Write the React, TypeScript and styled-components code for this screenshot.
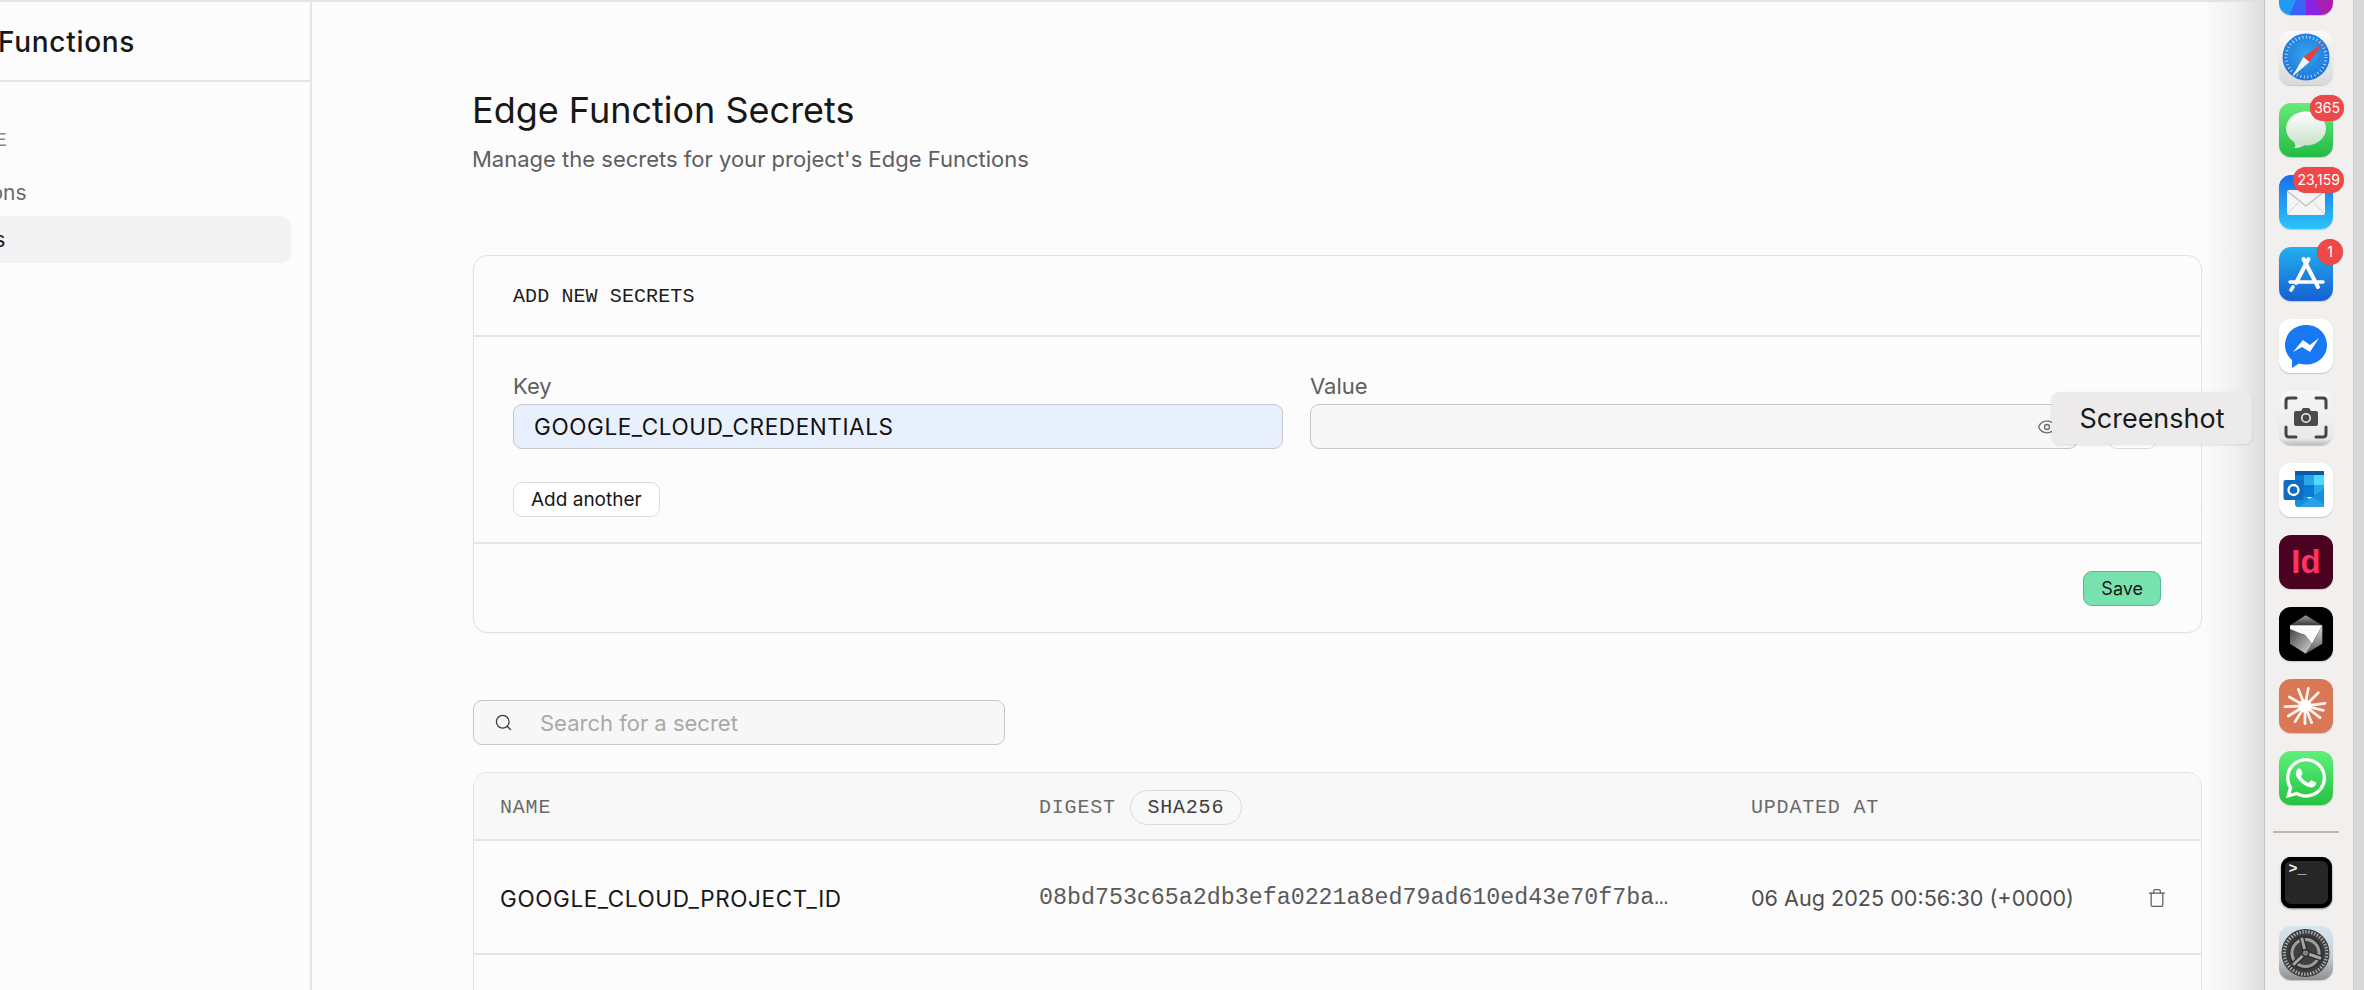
import React from "react";
import styled, { createGlobalStyle } from "styled-components";
import { Search, Eye, Trash } from "lucide-react";
import { FaWhatsapp } from "react-icons/fa";

const Global = createGlobalStyle`
  html, body { margin: 0; padding: 0; height: 990px; overflow: hidden; background: #fcfcfc; }
  * { box-sizing: border-box; }
  #root { height: 990px; }
`;

const sans = `"Inter", "Liberation Sans", sans-serif`;
const mono = `"Liberation Mono", "DejaVu Sans Mono", monospace`;

const Screen = styled.div`
  display: flex;
  width: 2364px;
  height: 990px;
  overflow: hidden;
  position: relative;
  background: #d8d8d8;
  font-family: ${sans};
`;
const Browser = styled.div`
  flex: 0 0 2264px;
  display: flex;
  position: relative;
  background: #fcfcfc;
  border-top: 2px solid #e4e4e4;
  &::after {
    content: "";
    position: absolute;
    top: -2px;
    bottom: 0;
    right: 0;
    width: 62px;
    pointer-events: none;
    background: linear-gradient(90deg, rgba(222,222,222,0), rgba(222,222,222,0.35) 50%, rgba(222,222,222,1));
  }
`;
const Sidebar = styled.aside`
  flex: 0 0 312px;
  border-right: 2px solid #e4e4e4;
`;
const SideHeader = styled.div`
  height: 80px;
  border-bottom: 2px solid #e4e4e4;
  display: flex;
  align-items: center;
  padding-top: 1px;
`;
const SideTitle = styled.h1`
  margin: 0 0 0 -81px;
  font-size: 28px;
  letter-spacing: 0.7px;
  font-weight: 500;
  color: #171717;
  white-space: nowrap;
`;
const SideGroup = styled.div`
  margin: 45px 19px 0 -85px;
  display: flex;
  flex-direction: column;
`;
const SideLabel = styled.div`
  font-family: ${mono};
  font-size: 20px;
  color: #8a8a8a;
  line-height: 28px;
  padding-left: 20px;
  margin-bottom: 14px;
`;
const SideItem = styled.div<{ $active?: boolean }>`
  height: 47px;
  border-radius: 10px;
  display: flex;
  align-items: center;
  padding-left: 15px;
  font-size: 21px;
  color: ${(p) => (p.$active ? "#171717" : "#6a6a6a")};
  background: ${(p) => (p.$active ? "#f3f3f3" : "transparent")};
`;
const Main = styled.main`
  flex: 1;
  padding: 86px 62px 0 161px;
  min-width: 0;
`;
const Title = styled.h2`
  margin: 0 0 0 -1px;
  font-size: 36px;
  line-height: 44px;
  font-weight: 400;
  color: #171717;
`;
const Subtitle = styled.p`
  margin: 0 0 0 -1px;
  padding-top: 12px;
  font-size: 22px;
  line-height: 30px;
  color: #5e5e5e;
`;
const Card = styled.section`
  margin-top: 81px;
  border: 1px solid #e2e2e2;
  border-radius: 14px;
  background: #fcfcfc;
  box-shadow: 0 1px 2px rgba(0, 0, 0, 0.03);
`;
const CardHeader = styled.div`
  height: 81px;
  padding: 2px 0 0 39px;
  display: flex;
  align-items: center;
  border-bottom: 2px solid #e6e6e6;
  font-family: ${mono};
  font-size: 20px;
  letter-spacing: 0.1px;
  color: #1c1c1c;
`;
const CardBody = styled.div`
  padding: 36px 41px 25px 39px;
  border-bottom: 2px solid #e6e6e6;
`;
const Fields = styled.div`
  display: grid;
  grid-template-columns: 770px 768px 52px;
  column-gap: 27px;
  align-items: end;
  margin-bottom: 33px;
`;
const Field = styled.div`
  display: flex;
  flex-direction: column;
  gap: 3px;
`;
const Label = styled.label`
  font-size: 22px;
  line-height: 26px;
  padding-bottom: 2px;
  color: #5e5e5e;
`;
const InputBox = styled.div<{ $filled?: boolean }>`
  height: 45px;
  border-radius: 9px;
  border: 1px solid ${(p) => (p.$filled ? "#c3c8d2" : "#c6c6c6")};
  background: ${(p) => (p.$filled ? "#e8f0fd" : "#f7f7f7")};
  display: flex;
  align-items: center;
  justify-content: flex-end;
  padding: 0 20px;
  color: #6e6e6e;
`;
const InputValue = styled.span`
  flex: 1;
  color: #111;
  font-size: 22.5px;
  letter-spacing: 0.6px;
`;
const Button = styled.button<{ $primary?: boolean }>`
  height: 35px;
  padding: 0 17px;
  border-radius: 9px;
  border: 1px solid ${(p) => (p.$primary ? "#4fbd8d" : "#dcdcdc")};
  background: ${(p) => (p.$primary ? "#77e2ae" : "#ffffff")};
  font-family: ${sans};
  font-size: ${(p) => (p.$primary ? "18px" : "19px")};
  color: #171717;
  display: inline-flex;
  align-items: center;
  justify-content: center;
`;
const RowButton = styled(Button)`
  margin-left: 3px;
`;
const CardFooter = styled.div`
  padding: 27px 40px 26px 0;
  display: flex;
  justify-content: flex-end;
`;
const SearchBox = styled.div`
  margin-top: 67px;
  width: 532px;
  height: 45px;
  border: 1px solid #c6c6c6;
  border-radius: 9px;
  background: #f7f7f7;
  display: flex;
  align-items: center;
  padding-left: 20px;
  gap: 27px;
  color: #3a3a3a;
`;
const SearchText = styled.span`
  font-size: 22px;
  color: #a9a9a9;
`;
const Table = styled.section`
  margin-top: 27px;
  height: 400px;
  border: 1px solid #e2e2e2;
  border-radius: 14px 14px 0 0;
`;
const Row = styled.div<{ $head?: boolean }>`
  display: grid;
  grid-template-columns: 539px 712px 1fr 20px;
  align-items: center;
  height: ${(p) => (p.$head ? "68px" : "114px")};
  padding: 2px 34px 0 26px;
  border-bottom: 2px solid #e6e6e6;
  background: ${(p) => (p.$head ? "#f8f8f8" : "transparent")};
  border-radius: ${(p) => (p.$head ? "13px 13px 0 0" : "0")};
`;
const HeadCell = styled.div`
  font-family: ${mono};
  font-size: 20px;
  letter-spacing: 0.8px;
  color: #6a6a6a;
  display: flex;
  align-items: center;
  gap: 14px;
`;
const Pill = styled.span`
  height: 35px;
  width: 112px;
  border: 1px solid #dcdcdc;
  border-radius: 18px;
  display: inline-flex;
  align-items: center;
  justify-content: center;
  color: #3f3f3f;
`;
const NameCell = styled.div`
  font-size: 22.5px;
  letter-spacing: 0.6px;
  color: #171717;
`;
const DigestCell = styled.div`
  font-family: ${mono};
  font-size: 23.3px;
  color: #5a5a5a;
  white-space: nowrap;
`;
const DateCell = styled.div`
  font-size: 21.6px;
  color: #4e4e4e;
  white-space: nowrap;
`;
const IconSlot = styled.div`
  display: flex;
  justify-content: center;
  color: #5e5e5e;
`;
const Dock = styled.nav`
  flex: 0 0 90px;
  background: #f2f0ee;
  border-left: 1px solid #c4c4c4;
  border-right: 1px solid #cfcfcf;
  display: flex;
  flex-direction: column;
  align-items: center;
  gap: 18px;
  padding-right: 6px;
  margin-right: 10px;
`;
const Tile = styled.div<{ $bg?: string; $first?: boolean }>`
  position: relative;
  flex: 0 0 54px;
  width: 54px;
  height: 54px;
  border-radius: 12px;
  background: ${(p) => p.$bg || "#fff"};
  box-shadow: 0 1px 1px rgba(0, 0, 0, 0.18);
  margin-top: ${(p) => (p.$first ? "-39px" : "0")};
  margin-bottom: ${(p) => (p.$first ? "-2px" : "0")};
  svg { display: block; }
`;
const TerminalTile = styled.div`
  position: relative;
  flex: 0 0 51px;
  width: 51px;
  height: 51px;
  border-radius: 10px;
  background: #262626;
  box-shadow: inset 0 0 0 4px #000, 0 1px 2px rgba(0, 0, 0, 0.5);
`;
const Badge = styled.span<{ $right: number }>`
  position: absolute;
  top: -8px;
  right: ${(p) => p.$right}px;
  height: 26px;
  min-width: 26px;
  padding: 0 4px;
  border-radius: 13px;
  background: #ef4848;
  color: #fff;
  font-size: 14px;
  line-height: 26px;
  text-align: center;
  font-family: "Inter", sans-serif;
  box-shadow: 0 0 1px rgba(0, 0, 0, 0.3);
`;
const Separator = styled.div`
  flex: 0 0 2px;
  width: 66px;
  background: #b9b8b6;
  margin: 8px 0 6px;
`;
const IdText = styled.span`
  display: flex;
  justify-content: center;
  line-height: 54px;
  font-family: "Liberation Sans", sans-serif;
  font-weight: 700;
  font-size: 33px;
  color: #ff3366;
`;
const TerminalText = styled.span`
  position: absolute;
  left: 8px;
  top: 4px;
  font-family: ${mono};
  font-size: 15px;
  font-weight: 700;
  color: #f4f4f4;
`;
const WhatsappWrap = styled.div`
  display: flex;
  align-items: center;
  justify-content: center;
  height: 100%;
  color: #fff;
`;
const Tooltip = styled.div`
  position: absolute;
  left: 2052px;
  top: 392px;
  width: 200px;
  height: 52px;
  border-radius: 8px;
  background: #eceaea;
  box-shadow: 0 1px 3px rgba(0, 0, 0, 0.12);
  display: flex;
  align-items: center;
  justify-content: center;
  font-size: 27px;
  font-family: "Inter", sans-serif;
  color: #1a1a1a;
`;

const Safari = () => (
  <svg width="54" height="54" viewBox="0 0 54 54">
    <defs>
      <radialGradient id="sf" cx="50%" cy="45%" r="55%"><stop offset="0" stopColor="#35a7f0" /><stop offset="1" stopColor="#1e74d8" /></radialGradient>
    </defs>
    <circle cx="27" cy="26" r="23.5" fill="url(#sf)" />
    <circle cx="27" cy="26" r="20" fill="none" stroke="#cfe6fa" strokeWidth="3" strokeDasharray="1 2.6" opacity=".85" />
    <path d="M44 12 L24.5 26 L30.5 31 Z" fill="#ef3d3d" />
    <path d="M13 46 L24.5 26 L30.5 31 Z" fill="#f4f4f4" />
  </svg>
);
const Messages = () => (
  <svg width="54" height="54" viewBox="0 0 54 54">
    <defs><linearGradient id="mb" x1="0" y1="0" x2="0" y2="1"><stop offset="0" stopColor="#fff" /><stop offset="1" stopColor="#c9e0cb" /></linearGradient></defs>
    <path d="M15 36 C15 41 18 43 15 45 C21 45 25 43 28 40 Z" fill="#d5e6d6" />
    <ellipse cx="27" cy="25.5" rx="20" ry="17" fill="url(#mb)" />
  </svg>
);
const Mail = () => (
  <svg width="54" height="54" viewBox="0 0 54 54">
    <rect x="8" y="15" width="38" height="25" rx="2" fill="#f4f4f4" />
    <path d="M8 16 L27 31 L46 16" fill="none" stroke="#bdbdbd" strokeWidth="1.2" />
    <path d="M8 39 L21 26 M46 39 L33 26" fill="none" stroke="#cfcfcf" strokeWidth="1" />
  </svg>
);
const AppStore = () => (
  <svg width="54" height="54" viewBox="0 0 54 54" fill="none" stroke="#fff" strokeLinecap="round">
    <path d="M29.5 12 L17 36" strokeWidth="4" />
    <path d="M24.5 12 L39 40" strokeWidth="4" />
    <path d="M11 35 H44" strokeWidth="3.4" />
    <path d="M14 40 L12 43" strokeWidth="3.6" />
  </svg>
);
const Messenger = () => (
  <svg width="54" height="54" viewBox="0 0 54 54">
    <path d="M27 6 C15 6 6 14.6 6 26 C6 32.2 8.7 37.5 13 41 V49 L20 44.5 C22.2 45.2 24.5 45.6 27 45.6 C39 45.6 48 37 48 26 C48 14.6 39 6 27 6 Z" fill="#1877f2" />
    <path d="M14 33 L24 21 L31 26 L40 19 L31 33 L23 28 Z" fill="#fff" />
  </svg>
);
const ScreenshotIcon = () => (
  <svg width="54" height="54" viewBox="0 0 54 54">
    <g fill="none" stroke="#444" strokeWidth="3" strokeLinecap="round">
      <path d="M7 17 V10 Q7 7 10 7 H17" />
      <path d="M37 7 H44 Q47 7 47 10 V17" />
      <path d="M47 36 V43 Q47 46 44 46 H37" />
      <path d="M17 46 H10 Q7 46 7 43 V36" />
    </g>
    <path d="M17 20 H22 L24 17 H30 L32 20 H37 Q39 20 39 22 V33 Q39 35 37 35 H17 Q15 35 15 33 V22 Q15 20 17 20 Z" fill="#4a4a4a" />
    <circle cx="27" cy="27" r="4.2" fill="none" stroke="#eee" strokeWidth="1.6" />
  </svg>
);
const Outlook = () => (
  <svg width="54" height="54" viewBox="0 0 54 54">
    <rect x="16" y="8" width="29" height="26" fill="#0f78d4" />
    <rect x="16" y="8" width="29" height="4" fill="#0a5aa8" />
    <rect x="35" y="12" width="10" height="10" fill="#50d9ff" />
    <rect x="25" y="12" width="10" height="10" fill="#28a8ea" />
    <rect x="35" y="22" width="10" height="10" fill="#28a8ea" />
    <path d="M16 26 L30.5 36 L45 26 V44 H19 Q16 44 16 41 Z" fill="#1490df" />
    <path d="M20 44 L34 34 L45 42 V44 Z" fill="#2ba1e6" />
    <rect x="4.5" y="17" width="20" height="20" rx="2" fill="#0f6cc0" />
    <circle cx="14.5" cy="27" r="5" fill="none" stroke="#fff" strokeWidth="2.3" />
  </svg>
);
const Cube = () => (
  <svg width="54" height="54" viewBox="0 0 54 54">
    <defs>
      <linearGradient id="c0" x1="0" y1="0" x2="0" y2="1"><stop offset="0" stopColor="#9a9a9a" /><stop offset="1" stopColor="#3a3a3a" /></linearGradient>
      <linearGradient id="c1" x1="0" y1="0" x2="1" y2="1"><stop offset="0" stopColor="#444" /><stop offset="1" stopColor="#d6d6d6" /></linearGradient>
      <linearGradient id="c2" x1="0" y1="0" x2="0" y2="1"><stop offset="0" stopColor="#dcdcdc" /><stop offset="1" stopColor="#5a5a5a" /></linearGradient>
    </defs>
    <path d="M26.7 8.3 L43.3 18.3 L11 18.3 Z" fill="url(#c0)" />
    <path d="M11 18.3 L43.3 18.3 L33 37 L26 28 L11 24 Z" fill="#fbfbfb" />
    <path d="M11 22 L26 28 L33 37 L26.7 46.7 L11 36.7 Z" fill="url(#c1)" />
    <path d="M43.3 18.3 L43.3 36.7 L26.7 46.7 L33 37 Z" fill="url(#c2)" />
  </svg>
);
const burstRays: [number, number][] = [
  [115, 52], [145, 65], [165, 97], [160, 118], [150, 140], [125, 155],
  [105, 158], [75, 152], [55, 135], [45, 107], [58, 78], [85, 55],
];
const Burst = () => (
  <svg width="54" height="54" viewBox="0 0 54 54">
    <g stroke="#fdf3ee" strokeWidth="2.8" strokeLinecap="round">
      {burstRays.map(([x, y]) => (
        <line key={x + "-" + y} x1="26" y1="27" x2={x / 3 - 9} y2={y / 3 - 8} />
      ))}
    </g>
    <circle cx="26" cy="27" r="6.5" fill="#fff" />
  </svg>
);
const Gear = () => (
  <svg width="54" height="54" viewBox="0 0 54 54">
    <circle cx="26.5" cy="27" r="24" fill="#3a3b3c" />
    <circle cx="26.5" cy="27" r="21.2" fill="none" stroke="#a8a9aa" strokeWidth="3.4" strokeDasharray="1.5 1.5" />
    <circle cx="26.5" cy="27" r="16" fill="#5a5c5e" stroke="#2c2d2e" strokeWidth="1.5" />
    <circle cx="26.5" cy="27" r="13.5" fill="#3f4042" stroke="#9c9d9e" strokeWidth="3" />
    <g strokeLinecap="round">
      <g stroke="#2c2d2e" strokeWidth="5.6">
        <line x1="26.5" y1="27" x2="23" y2="13" />
        <line x1="26.5" y1="27" x2="41" y2="32" />
        <line x1="26.5" y1="27" x2="15" y2="38" />
      </g>
      <g stroke="#a5a6a7" strokeWidth="3">
        <line x1="26.5" y1="27" x2="23" y2="13" />
        <line x1="26.5" y1="27" x2="41" y2="32" />
        <line x1="26.5" y1="27" x2="15" y2="38" />
      </g>
    </g>
    <circle cx="26.5" cy="27" r="3.4" fill="#7d7e80" stroke="#2c2d2e" strokeWidth="1.2" />
  </svg>
);

export default function App() {
  return (
    <Screen>
      <Global />
      <Browser>
        <Sidebar>
          <SideHeader>
            <SideTitle>Edge Functions</SideTitle>
          </SideHeader>
          <SideGroup>
            <SideLabel>MANAGE</SideLabel>
            <SideItem>Functions</SideItem>
            <SideItem $active>Secrets</SideItem>
          </SideGroup>
        </Sidebar>
        <Main>
          <Title>Edge Function Secrets</Title>
          <Subtitle>Manage the secrets for your project's Edge Functions</Subtitle>
          <Card>
            <CardHeader>ADD NEW SECRETS</CardHeader>
            <CardBody>
              <Fields>
                <Field>
                  <Label>Key</Label>
                  <InputBox $filled><InputValue>GOOGLE_CLOUD_CREDENTIALS</InputValue></InputBox>
                </Field>
                <Field>
                  <Label>Value</Label>
                  <InputBox><Eye size={20} strokeWidth={1.6} /></InputBox>
                </Field>
                <RowButton><Trash size={20} strokeWidth={1.6} /></RowButton>
              </Fields>
              <Button>Add another</Button>
            </CardBody>
            <CardFooter>
              <Button $primary>Save</Button>
            </CardFooter>
          </Card>
          <SearchBox>
            <Search size={19} strokeWidth={1.6} />
            <SearchText>Search for a secret</SearchText>
          </SearchBox>
          <Table>
            <Row $head>
              <HeadCell>NAME</HeadCell>
              <HeadCell>DIGEST <Pill>SHA256</Pill></HeadCell>
              <HeadCell>UPDATED AT</HeadCell>
              <span />
            </Row>
            <Row>
              <NameCell>GOOGLE_CLOUD_PROJECT_ID</NameCell>
              <DigestCell>08bd753c65a2db3efa0221a8ed79ad610ed43e70f7ba…</DigestCell>
              <DateCell>06 Aug 2025 00:56:30 (+0000)</DateCell>
              <IconSlot><Trash size={20} strokeWidth={1.5} /></IconSlot>
            </Row>
          </Table>
        </Main>
      </Browser>
      <Dock>
        <Tile $first $bg="conic-gradient(at 50% 26%, #f03a80 0 112deg, #aa1fb0 112deg 158deg, #8a22e0 158deg 180deg, #3a63f5 180deg 202deg, #1f9bf5 202deg 248deg, #30c060 248deg 360deg)" />
        <Tile $bg="linear-gradient(#fbfbfb, #d9d9d9)"><Safari /></Tile>
        <Tile $bg="linear-gradient(#66ec78, #22bb45)"><Messages /><Badge $right={-11}>365</Badge></Tile>
        <Tile $bg="linear-gradient(#1b6fe8, #2cc4fb)"><Mail /><Badge $right={-11}>23,159</Badge></Tile>
        <Tile $bg="linear-gradient(#22b0ef, #1760d2)"><AppStore /><Badge $right={-10}>1</Badge></Tile>
        <Tile $bg="#ffffff"><Messenger /></Tile>
        <Tile $bg="linear-gradient(#f6f6f6, #e9e9e9 88%, #bcbcbc)"><ScreenshotIcon /></Tile>
        <Tile $bg="#ffffff"><Outlook /></Tile>
        <Tile $bg="#49021f"><IdText>Id</IdText></Tile>
        <Tile $bg="#000000"><Cube /></Tile>
        <Tile $bg="#d97757"><Burst /></Tile>
        <Tile $bg="linear-gradient(#5ff07c, #25c23f)"><WhatsappWrap><FaWhatsapp size={46} /></WhatsappWrap></Tile>
        <Separator />
        <TerminalTile><TerminalText>&gt;_</TerminalText></TerminalTile>
        <Tile $bg="linear-gradient(#d6e6ee, #c6d0d4 55%, #8f8f8f)"><Gear /></Tile>
      </Dock>
      <Tooltip>Screenshot</Tooltip>
    </Screen>
  );
}
